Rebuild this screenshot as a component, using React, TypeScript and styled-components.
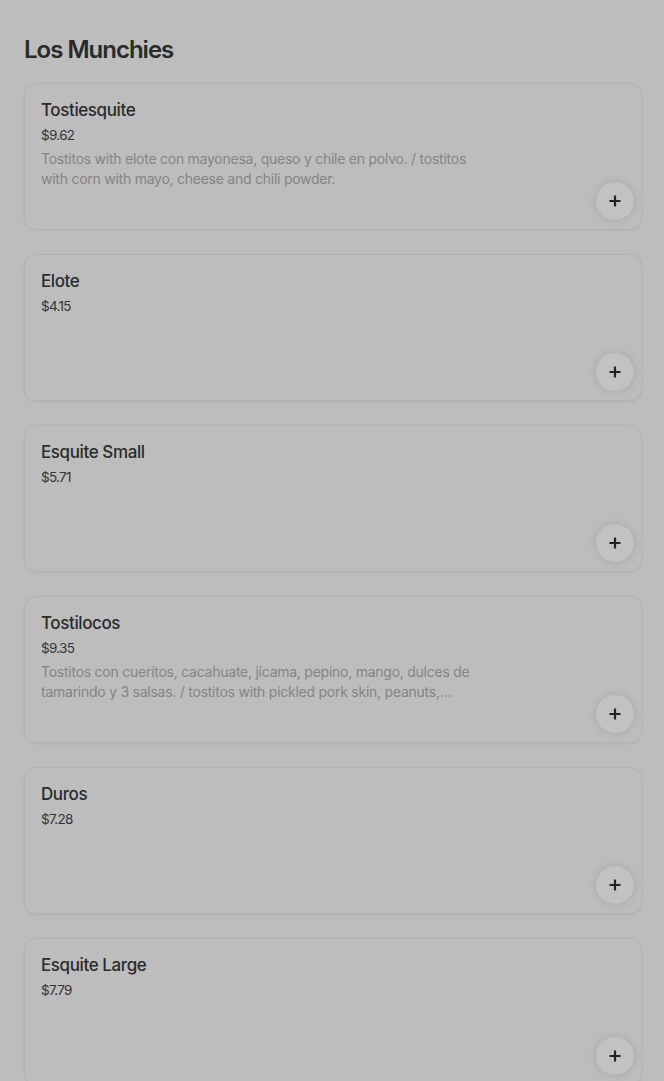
import { createGlobalStyle, styled } from "styled-components";

const GlobalStyle = createGlobalStyle`
  html, body {
    margin: 0;
    padding: 0;
    background: #bdbdbd;
  }
  body {
    font-family: Inter, "Noto Sans", "Liberation Sans", sans-serif;
    color: #2b2b2b;
  }
`;

const Page = styled.div`
  padding: 34px 22px 0 24px;
`;

const Heading = styled.h2`
  margin: 0 0 17px;
  font-size: 24px;
  line-height: 32px;
  font-weight: 600;
  letter-spacing: -1px;
  color: #2a2a2a;
`;

const List = styled.div`
  display: flex;
  flex-direction: column;
  gap: 24px;
`;

const Card = styled.div`
  display: grid;
  grid-template: 1fr / 1fr;
  box-sizing: border-box;
  height: 147px;
  padding: 14px 7px 9px 16px;
  border: 1px solid #b2b2b2;
  border-radius: 12px;
  box-shadow: 0 1px 3px rgba(0, 0, 0, 0.06);
`;

const Info = styled.div`
  grid-area: 1 / 1;
  align-self: start;
`;

const Name = styled.div`
  font-size: 17px;
  line-height: 24px;
  font-weight: 500;
  letter-spacing: -0.4px;
  color: #2b2b2b;
`;

const Price = styled.div`
  margin-top: 3px;
  font-size: 13.5px;
  line-height: 20px;
  color: #333;
  letter-spacing: -0.7px;
`;

const Description = styled.div`
  margin-top: 4px;
  max-width: 445px;
  font-size: 14px;
  line-height: 20px;
  letter-spacing: -0.25px;
  color: #848484;
  display: -webkit-box;
  -webkit-line-clamp: 2;
  -webkit-box-orient: vertical;
  overflow: hidden;
`;

const AddButton = styled.button`
  grid-area: 1 / 1;
  align-self: end;
  justify-self: end;
  width: 38px;
  height: 38px;
  border-radius: 50%;
  border: 0;
  padding: 0;
  background: #c2c2c2;
  box-shadow: 0 0 8px rgba(0, 0, 0, 0.12);
  display: flex;
  align-items: center;
  justify-content: center;
  color: #222;
  cursor: pointer;
`;

type Item = { name: string; price: string; description?: string };

const items: Item[] = [
  {
    name: "Tostiesquite",
    price: "$9.62",
    description:
      "Tostitos with elote con mayonesa, queso y chile en polvo. / tostitos with corn with mayo, cheese and chili powder.",
  },
  { name: "Elote", price: "$4.15" },
  { name: "Esquite Small", price: "$5.71" },
  {
    name: "Tostilocos",
    price: "$9.35",
    description:
      "Tostitos con cueritos, cacahuate, jícama, pepino, mango, dulces de tamarindo y 3 salsas. / tostitos with pickled pork skin, peanuts, jicama, cucumber, mango, tamarind candy and 3 sauces.",
  },
  { name: "Duros", price: "$7.28" },
  { name: "Esquite Large", price: "$7.79" },
];

function PlusIcon() {
  return (
    <svg width="12" height="12" viewBox="0 0 12 12" fill="none">
      <path d="M6 0.5v11M0.5 6h11" stroke="currentColor" strokeWidth="2.2" />
    </svg>
  );
}

export default function App() {
  return (
    <Page>
      <GlobalStyle />
      <Heading>Los Munchies</Heading>
      <List>
        {items.map((item) => (
          <Card key={item.name}>
            <Info>
              <Name>{item.name}</Name>
              <Price>{item.price}</Price>
              {item.description && <Description>{item.description}</Description>}
            </Info>
            <AddButton aria-label={`Add ${item.name}`}>
              <PlusIcon />
            </AddButton>
          </Card>
        ))}
      </List>
    </Page>
  );
}
